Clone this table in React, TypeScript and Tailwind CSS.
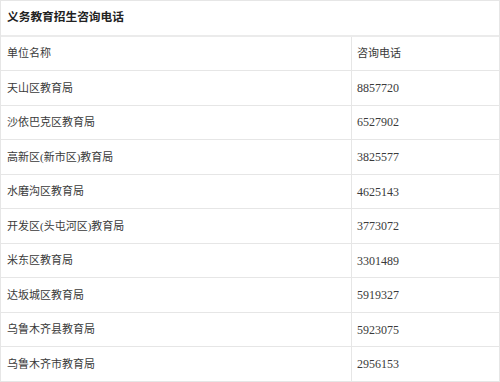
import React from "react";

const rows: [string, string][] = [
  ["天山区教育局", "8857720"],
  ["沙依巴克区教育局", "6527902"],
  ["高新区(新市区)教育局", "3825577"],
  ["水磨沟区教育局", "4625143"],
  ["开发区(头屯河区)教育局", "3773072"],
  ["米东区教育局", "3301489"],
  ["达坂城区教育局", "5919327"],
  ["乌鲁木齐县教育局", "5923075"],
  ["乌鲁木齐市教育局", "2956153"],
];

const font = { fontFamily: '"Liberation Serif", "Noto Sans CJK SC", serif' };

export default function App() {
  return (
    <div className="w-[500px] h-[382px] bg-white text-[#3a3a3a] flex flex-col border border-[#e6e6e6]" style={font}>
      <div className="flex-1 flex items-center px-[6px] border-b-2 border-[#ebebeb] text-[11.7px] font-bold text-[#222]">
        义务教育招生咨询电话
      </div>
      <div className="flex-1 flex border-b border-[#e6e6e6] text-[11px]">
        <div className="w-[351px] flex items-center px-[6px] border-r border-[#e6e6e6]">单位名称</div>
        <div className="flex-1 flex items-center px-[5px]">咨询电话</div>
      </div>
      {rows.map(([name, tel], i) => (
        <div
          key={name}
          className={`flex-1 flex text-[11px] ${i < rows.length - 1 ? "border-b border-[#e6e6e6]" : ""}`}
        >
          <div className="w-[351px] flex items-center px-[6px] border-r border-[#e6e6e6]">{name}</div>
          <div className="flex-1 flex items-center px-[5px] text-[12px]">{tel}</div>
        </div>
      ))}
    </div>
  );
}
